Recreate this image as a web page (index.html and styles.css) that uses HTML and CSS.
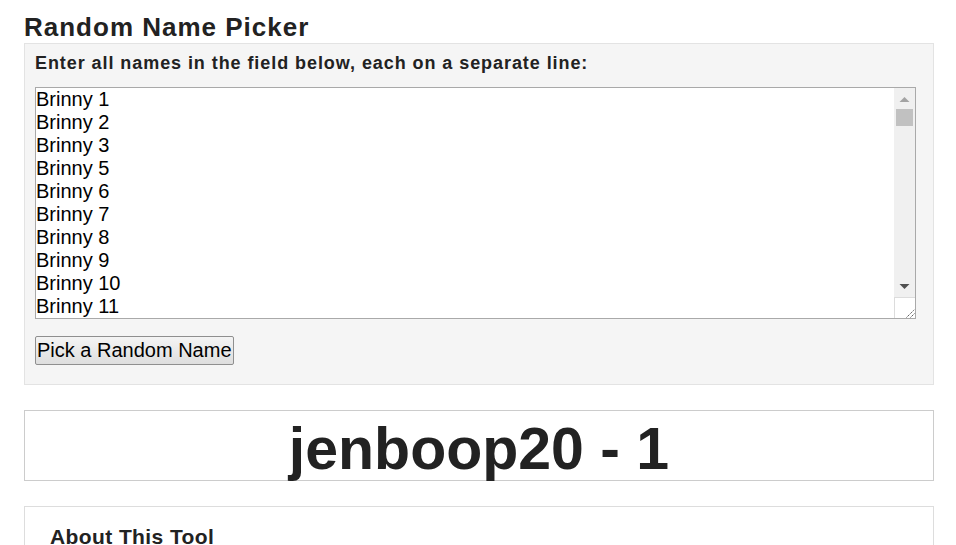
FILE: index.html
```html
<!DOCTYPE html>
<html>
<head>
<meta charset="utf-8">
<link rel="stylesheet" href="styles.css">
</head>
<body>
<div class="page">
  <h1 class="title">Random Name Picker</h1>
  <div class="panel">
    <label class="label" for="names">Enter all names in the field below, each on a separate line:</label>
    <div class="field">
      <textarea id="names" class="names">Brinny 1
Brinny 2
Brinny 3
Brinny 5
Brinny 6
Brinny 7
Brinny 8
Brinny 9
Brinny 10
Brinny 11
Brinny 12
Brinny 13
Brinny 14
Brinny 15
Brinny 16
Brinny 17
Brinny 18
Brinny 19
Brinny 20
Brinny 21
Brinny 22
Brinny 23
Brinny 24
Brinny 25
Brinny 26
Brinny 27
Brinny 28
Brinny 29
Brinny 30
Brinny 31
Brinny 32
Brinny 33
Brinny 34
Brinny 35
Brinny 36
Brinny 37
Brinny 38
Brinny 39
Brinny 40
Brinny 41
Brinny 42
Brinny 43
Brinny 44
Brinny 45
Brinny 46
Brinny 47
Brinny 48
Brinny 49
Brinny 50
Brinny 51
Brinny 52
Brinny 53
Brinny 54
Brinny 55
Brinny 56
Brinny 57
Brinny 58
Brinny 59
Brinny 60
Brinny 61
Brinny 62
Brinny 63
Brinny 64
Brinny 65
Brinny 66
Brinny 67
Brinny 68
Brinny 69
Brinny 70
Brinny 71
Brinny 72
Brinny 73
Brinny 74
Brinny 75
Brinny 76
Brinny 77
Brinny 78
Brinny 79
Brinny 80
Brinny 81
Brinny 82
Brinny 83
Brinny 84
Brinny 85
Brinny 86
Brinny 87
Brinny 88
Brinny 89
Brinny 90
Brinny 91
Brinny 92
Brinny 93
Brinny 94
Brinny 95
Brinny 96
Brinny 97
Brinny 98
Brinny 99
Brinny 100</textarea>
      <div class="vscroll" aria-hidden="true">
        <div class="sb-btn">
          <svg width="21" height="21" viewBox="0 0 21 21"><polygon points="5.5,14 10.5,9 15.5,14" fill="#a3a3a3"/></svg>
        </div>
        <div class="sb-track"><div class="sb-thumb"></div></div>
        <div class="sb-btn">
          <svg width="21" height="21" viewBox="0 0 21 21"><polygon points="5.5,8 15.5,8 10.5,13" fill="#505050"/></svg>
        </div>
        <div class="sb-corner">
          <svg width="20" height="20" viewBox="0 0 20 20"><path d="M11.5 19.5 L19.5 11.5 M15.5 19.5 L19.5 15.5" stroke="#555555" stroke-width="1" stroke-dasharray="1.4 0.8" fill="none"/></svg>
        </div>
      </div>
    </div>
    <button class="pick" type="button">Pick a Random Name</button>
  </div>
  <div class="result">jenboop20 - 1</div>
  <div class="about">
    <h2 class="about-title">About This Tool</h2>
  </div>
</div>
</body>
</html>
```

FILE: styles.css
```css
html, body {
  margin: 0;
  padding: 0;
  background: #ffffff;
  overflow: hidden;
}
body {
  font-family: "Liberation Sans", Arial, sans-serif;
  color: #222222;
}
.page {
  padding: 0 22px 0 24px;
  display: flex;
  flex-direction: column;
}
.title {
  font-size: 26px;
  letter-spacing: 1px;
  font-weight: bold;
  line-height: 30px;
  margin: 12px 0 1px 0;
  color: #222222;
}
.panel {
  background: #f5f5f5;
  border: 1px solid #e3e3e3;
  padding: 8px 17px 19px 10px;
  display: flex;
  flex-direction: column;
  align-items: flex-start;
}
.label {
  font-size: 18px;
  letter-spacing: 0.93px;
  font-weight: bold;
  line-height: 22px;
  margin-bottom: 13px;
  color: #222222;
}
.field {
  position: relative;
  display: flex;
}
.names {
  box-sizing: border-box;
  width: 881px;
  height: 232px;
  margin: 0;
  padding: 0 22px 0 0;
  border: 1px solid #a9a9a9;
  font-family: "Liberation Sans", Arial, sans-serif;
  font-size: 20px;
  line-height: 23px;
  color: #000000;
  background: #ffffff;
  resize: none;
  overflow: hidden;
}
.vscroll {
  position: absolute;
  top: 1px;
  right: 1px;
  bottom: 1px;
  width: 21px;
  display: flex;
  flex-direction: column;
  background: #f0f0f0;
}
.sb-btn {
  height: 21px;
  flex: none;
}
.sb-btn svg {
  display: block;
}
.sb-track {
  flex: 1;
  padding: 0 2px;
}
.sb-thumb {
  height: 17px;
  background: #c1c1c1;
}
.sb-corner {
  height: 21px;
  flex: none;
  box-sizing: border-box;
  background: #ffffff;
  border-left: 1px solid #dcdcdc;
  border-top: 1px solid #dcdcdc;
}
.sb-corner svg {
  display: block;
}
.pick {
  margin: 17px 0 0 0;
  height: 29px;
  padding: 0 1px;
  font-family: "Liberation Sans", Arial, sans-serif;
  font-size: 20px;
  color: #000000;
  background: linear-gradient(#f4f4f4, #dedede);
  border: 1px solid #8f8f8f;
  border-radius: 2px;
}
.result {
  margin-top: 25px;
  height: 69px;
  border: 1px solid #cccccc;
  font-size: 59px;
  font-weight: bold;
  line-height: 77px;
  text-align: center;
  color: #222222;
  overflow: visible;
}
.about {
  margin-top: 25px;
  border: 1px solid #dddddd;
  padding: 18px 25px;
}
.about-title {
  margin: 0;
  font-size: 21px;
  letter-spacing: 0.4px;
  font-weight: bold;
  line-height: 24px;
  color: #222222;
}
```
